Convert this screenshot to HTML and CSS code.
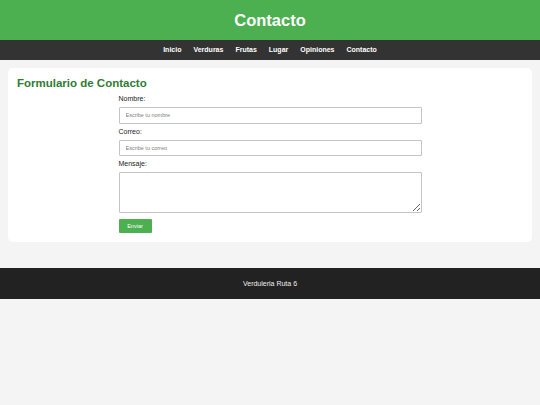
FILE: index.html
```html
<!DOCTYPE html>
<html lang="es">
<head>
<meta charset="utf-8">
<title>Contacto</title>
<link rel="stylesheet" href="styles.css">
</head>
<body>
<header class="site-header">
  <h1 class="site-title">Contacto</h1>
</header>
<nav class="site-nav">
  <a href="#">Inicio</a>
  <a href="#">Verduras</a>
  <a href="#">Frutas</a>
  <a href="#">Lugar</a>
  <a href="#">Opiniones</a>
  <a href="#">Contacto</a>
</nav>
<main class="card">
  <h2 class="card-title">Formulario de Contacto</h2>
  <form class="contact-form">
    <label class="field-label" for="nombre">Nombre:</label>
    <input class="field" id="nombre" type="text" placeholder="Escribe tu nombre">
    <label class="field-label" for="correo">Correo:</label>
    <input class="field" id="correo" type="email" placeholder="Escribe tu correo">
    <label class="field-label" for="mensaje">Mensaje:</label>
    <textarea class="field area" id="mensaje"></textarea>
    <button class="send" type="button">Enviar</button>
  </form>
</main>
<footer class="site-footer">
  <p class="footer-text">Verduleria Ruta 6</p>
</footer>
</body>
</html>
```

FILE: styles.css
```css
* { box-sizing: border-box; }
html, body { margin: 0; padding: 0; }
body {
  background: #f4f4f4;
  font-family: "Liberation Sans", Arial, sans-serif;
  color: #222;
}
.site-header {
  background: #4caf50;
  height: 40px;
  display: flex;
  align-items: center;
  justify-content: center;
}
.site-title {
  margin: 0;
  color: #fff;
  font-size: 16.5px;
  line-height: 20px;
  font-weight: bold;
}
.site-nav {
  background: #333;
  height: 20px;
  display: flex;
  justify-content: center;
  align-items: center;
  gap: 12px;
}
.site-nav a {
  color: #fff;
  text-decoration: none;
  font-size: 7px;
  font-weight: bold;
  line-height: 20px;
}
.card {
  display: block;
  background: #fff;
  margin: 8px 8px 0 8px;
  padding: 8px 9px 9px;
  border-radius: 5px;
}
.card-title {
  margin: 0 0 5px 0;
  color: #2e7d32;
  font-size: 11.5px;
  line-height: 14px;
  font-weight: bold;
}
.contact-form {
  width: 303px;
  margin: 0 auto;
  display: flex;
  flex-direction: column;
  align-items: flex-start;
}
.field-label {
  font-size: 7px;
  line-height: 8px;
  margin-bottom: 4px;
  color: #222;
}
.field {
  width: 100%;
  height: 16.5px;
  margin: 0 0 4px 0;
  padding: 0 6px;
  border: 1px solid #c4c4c4;
  border-radius: 1px;
  font-family: "Liberation Sans", Arial, sans-serif;
  font-size: 5.5px;
  background: #fff;
}
.field::placeholder { color: #808080; }
.area {
  height: 41px;
  margin-bottom: 6px;
  resize: vertical;
}
.send {
  background: #4caf50;
  color: #fff;
  border: none;
  border-radius: 1px;
  width: 33px;
  height: 14px;
  padding: 0;
  font-family: "Liberation Sans", Arial, sans-serif;
  font-size: 5.5px;
}
.site-footer {
  background: #222;
  margin-top: 26px;
  height: 31px;
  display: flex;
  align-items: center;
  justify-content: center;
}
.footer-text {
  margin: 0;
  color: #eee;
  font-size: 7px;
}
```
